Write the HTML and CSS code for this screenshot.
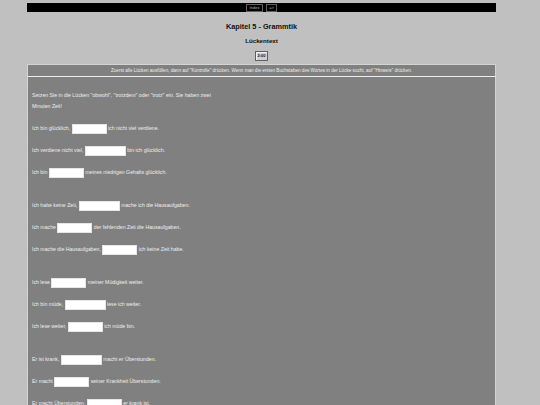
FILE: index.html
```html
<!DOCTYPE html>
<html lang="de">
<head>
<meta charset="utf-8">
<title>Kapitel 5 - Grammtik</title>
<link rel="stylesheet" href="styles.css">
</head>
<body>
<div class="navbar">
  <button class="navbtn">Index</button>
  <button class="navbtn">=&gt;</button>
</div>
<h2 class="title">Kapitel 5 - Grammtik</h2>
<h3 class="subtitle">Lückentext</h3>
<div class="timerrow"><span class="timer">2:00</span></div>
<div class="instructions">Zuerst alle Lücken ausfüllen, dann auf "Kontrolle" drücken. Wenn man die ersten Buchstaben des Wortes in der Lücke sucht, auf "Hinweis" drücken.</div>
<div class="main">
  <p class="intro">Setzen Sie in die Lücken "obwohl", "trotzdem" oder "trotz" ein. Sie haben zwei<br>Minuten Zeit!</p>
  <div class="group">
    <div class="line">Ich bin glücklich, <input class="gap w35" type="text"> ich nicht viel verdiene.</div>
    <div class="line">Ich verdiene nicht viel, <input class="gap w41" type="text"> bin ich glücklich.</div>
    <div class="line">Ich bin <input class="gap w35" type="text"> meines niedrigen Gehalts glücklich.</div>
  </div>
  <div class="group">
    <div class="line">Ich habe keine Zeit, <input class="gap w41" type="text"> mache ich die Hausaufgaben.</div>
    <div class="line">Ich mache <input class="gap w35" type="text"> der fehlenden Zeit die Hausaufgaben.</div>
    <div class="line">Ich mache die Hausaufgaben, <input class="gap w35" type="text"> ich keine Zeit habe.</div>
  </div>
  <div class="group">
    <div class="line">Ich lese <input class="gap w35" type="text"> meiner Müdigkeit weiter.</div>
    <div class="line">Ich bin müde, <input class="gap w41" type="text"> lese ich weiter.</div>
    <div class="line">Ich lese weiter, <input class="gap w35" type="text"> ich müde bin.</div>
  </div>
  <div class="group">
    <div class="line">Er ist krank, <input class="gap w41" type="text"> macht er Überstunden.</div>
    <div class="line">Er macht <input class="gap w35" type="text"> seiner Krankheit Überstunden.</div>
    <div class="line">Er macht Überstunden, <input class="gap w35" type="text"> er krank ist.</div>
  </div>
</div>
</body>
</html>
```
FILE: styles.css
```css
html {
  background: #c0c0c0;
  overflow: hidden;
}
body {
  margin: 3px 44px 0 27px;
  background: #c0c0c0;
  font-family: "Liberation Sans", Arial, sans-serif;
  font-size: 5px;
  color: #000;
}
.navbar {
  background: #000;
  height: 9px;
  display: flex;
  justify-content: center;
  align-items: center;
  gap: 3px;
}
.navbtn {
  margin: 0;
  padding: 0 2px;
  height: 8px;
  min-width: 11px;
  background: #000;
  color: #b8b8b8;
  border: 1px solid #606060;
  font-family: "Liberation Sans", Arial, sans-serif;
  font-size: 4px;
  line-height: 6px;
}
.navbtn:first-child {
  width: 17px;
}
.title {
  margin: 10px 0 0;
  text-align: center;
  font-size: 7.3px;
  line-height: 9px;
  font-weight: bold;
  color: #111;
}
.subtitle {
  margin: 6px 0 0;
  text-align: center;
  font-size: 6.2px;
  line-height: 8px;
  font-weight: bold;
  color: #111;
}
.timerrow {
  display: flex;
  justify-content: center;
  margin-top: 6px;
}
.timer {
  display: block;
  width: 11px;
  height: 8px;
  border: 1px solid #606060;
  background: #d0d0d0;
  font-size: 4px;
  line-height: 8px;
  font-weight: bold;
  text-align: center;
  color: #111;
  box-shadow: inset 1px 1px 0 #f0f0f0;
}
.instructions {
  margin-top: 3px;
  background: #808080;
  border: 1px solid #d4d4d4;
  border-bottom: none;
  height: 11px;
  line-height: 11px;
  text-align: center;
  color: #eeeeee;
  font-size: 4.6px;
}
.main {
  background: #808080;
  border: 1px solid #d4d4d4;
  border-top: 1px solid #eeeeee;
  padding: 13px 4px 40px;
  color: #eeeeee;
  font-size: 5.2px;
  line-height: 11px;
}
.intro {
  margin: 0 0 11px;
}
.group {
  display: flex;
  flex-direction: column;
  gap: 11px;
  margin-bottom: 22px;
}
.line {
  height: 11px;
  line-height: 11px;
  white-space: nowrap;
}
.gap {
  box-sizing: border-box;
  height: 10px;
  margin: 0;
  padding: 0;
  border: 1px solid #e6e6e6;
  background: #fff;
  vertical-align: middle;
  font-size: 4px;
}
.w35 {
  width: 35px;
}
.w41 {
  width: 41px;
}
```
